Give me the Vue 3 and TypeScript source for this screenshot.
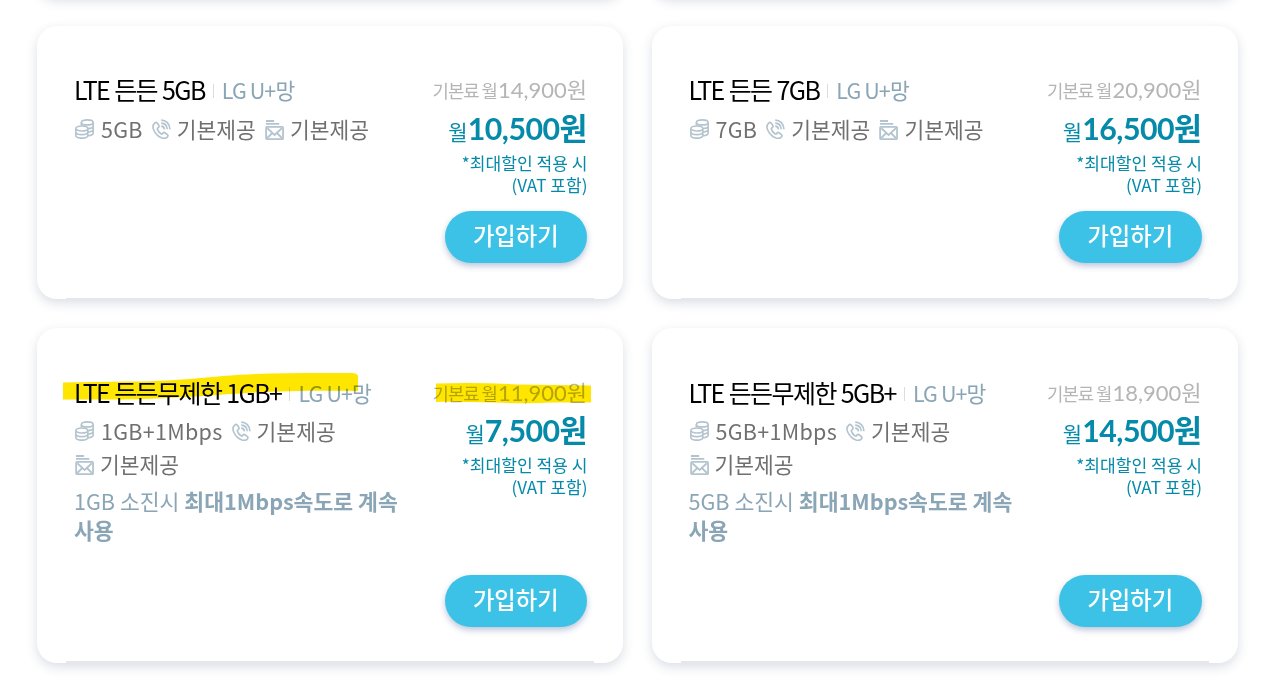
<template>
  <main class="page">
    <ul class="plans">
      <li v-for="n in 2" :key="`prev-${n}`" class="card card-prev"></li>
      <li
        v-for="plan in plans"
        :key="plan.name"
        class="card"
        :class="{ tall: plan.limit }"
      >
        <div class="info">
          <h2 class="title">
            <span class="name">{{ plan.name }}</span>
            <span class="network">LG U+망</span>
          </h2>
          <ul class="features">
            <li>
              <svg class="icon" viewBox="0 0 20 20" preserveAspectRatio="none">
                <ellipse cx="12.9" cy="3.4" rx="6.2" ry="2.5" />
                <path d="M6.7 3.4v3.2M19.1 3.4v10.8c0 1.3-2.4 2.3-5.4 2.5M19.1 7c0 1.4-2.6 2.5-5.8 2.5M19.1 10.600c0 1.300-2.300 2.300-5.400 2.500" />
                <ellipse cx="7.200" cy="9.500" rx="6.300" ry="2.500" />
                <path d="M.9 9.500v7.100c0 1.500 2.800 2.600 6.300 2.600s6.300-1.100 6.300-2.600V9.500M.9 13c0 1.500 2.800 2.600 6.300 2.600s6.300-1.100 6.300-2.600" />
              </svg>
              <span class="data">{{ plan.data }}</span>
            </li>
            <li>
              <svg class="icon" viewBox="0 0 20 20" preserveAspectRatio="none">
                <path d="M2.800 4.100C.9 5.800.5 8.100 1.800 11c1.700 3.700 4.800 6.700 8.700 8 2.600.8 4.700.3 5.900-1.300.6-.8.5-1.500-.2-2.100l-2.500-1.900c-.7-.5-1.400-.4-2 .2l-.8.9c-.4.4-.9.4-1.300.1C7.800 13.700 6.500 12.200 5.700 10.300c-.2-.5-.1-.9.3-1.300l.8-.7c.7-.6.8-1.200.4-2L5.600 4.300c-.6-1.200-1.700-1.300-2.800-.2z" />
                <path d="M9.700 7.100c1.900.1 3.200 1.300 3.400 3.300M9.700 4.100c3.600.1 6.100 2.500 6.300 6.200M9.700 1.100c5.200.1 8.900 3.700 9.200 9.100" />
              </svg>
              <span>기본제공</span>
            </li>
            <li>
              <svg class="icon mail" viewBox="0 0 20 20" preserveAspectRatio="none">
                <path d="M1 1h8.600M1 3.900h14" />
                <rect x="1.200" y="6.900" width="17.800" height="12.200" rx=".8" />
                <path d="M2.500 8.300l7.600 6.600 7.600-6.600M2.400 18l5-4.800M17.800 18l-5-4.800" />
              </svg>
              <span>기본제공</span>
            </li>
          </ul>
          <p v-if="plan.limit" class="limit">
            {{ plan.limit }} 소진시 <strong>최대1Mbps속도로 계속 사용</strong>
          </p>
        </div>
        <div class="fee">
          <p class="base">기본료 월<span class="num">{{ plan.base }}원</span></p>
          <p class="price">월<strong>{{ plan.price }}원</strong></p>
          <p class="note">*최대할인 적용 시<br />(VAT 포함)</p>
          <button type="button" class="join">가입하기</button>
        </div>
        <svg v-if="plan.marked" class="marker" viewBox="0 0 586 335">
          <path d="M26 54.5L88 53.5C122 54 154 51 186 48C222 44.5 270 45 316 45Q321 46 321 48V63C270 62 220 63.5 180 67C145 69.5 110 71.5 70 71.5L26 71.5Z" />
          <path d="M399 55.5Q440 54 480 56.5L554 57.5V74.5H515C477 76.5 440 73 399 74Z" />
        </svg>
      </li>
    </ul>
  </main>
</template>

<script setup lang="ts">
interface Plan {
  name: string;
  data: string;
  base: string;
  price: string;
  limit?: string;
  marked?: boolean;
}

const plans: Plan[] = [
  { name: "LTE 든든 5GB", data: "5GB", base: "14,900", price: "10,500" },
  { name: "LTE 든든 7GB", data: "7GB", base: "20,900", price: "16,500" },
  {
    name: "LTE 든든무제한 1GB+",
    data: "1GB+1Mbps",
    base: "11,900",
    price: "7,500",
    limit: "1GB",
    marked: true,
  },
  {
    name: "LTE 든든무제한 5GB+",
    data: "5GB+1Mbps",
    base: "18,900",
    price: "14,500",
    limit: "5GB",
  },
];
</script>

<style>
body {
  margin: 0;
  background: #fff;
}
</style>

<style scoped>
.page {
  height: 681px;
  overflow: hidden;
  font-family: "Noto Sans CJK KR", sans-serif;
}

ul,
p,
h2 {
  margin: 0;
  padding: 0;
  list-style: none;
}

.plans {
  display: grid;
  grid-template-columns: 586px 586px;
  grid-template-rows: 40px 273px 335px;
  column-gap: 28.5px;
  row-gap: 29px;
  margin: -43px 0 0 37px;
}

.card {
  position: relative;
  box-sizing: border-box;
  display: flex;
  justify-content: space-between;
  padding: 46px 36px 36px 37px;
  border-radius: 20px;
  background: #fff;
  box-shadow: 0 4px 11px rgba(40, 60, 100, 0.17);
}

.card::after {
  content: "";
  position: absolute;
  left: 29px;
  right: 29px;
  bottom: 0;
  height: 1px;
  background: #e4e8ec;
}

.tall::after {
  height: 2px;
}

.card-prev {
  padding: 0;
}

.card-prev::after {
  display: none;
}

.info {
  width: 345px;
}

.title {
  display: flex;
  align-items: center;
  height: 34px;
  white-space: nowrap;
}

.tall .title {
  padding-top: 1px;
}

.name {
  color: #000;
  font-size: 25px;
  font-weight: 400;
  line-height: 34px;
  letter-spacing: -1.55px;
  word-spacing: 0.8px;
}

.network {
  display: flex;
  align-items: center;
  padding-top: 2px;
  color: #8aa5b5;
  font-size: 21.5px;
  font-weight: 400;
  line-height: 34px;
  letter-spacing: -0.9px;
}

.network::before {
  content: "";
  width: 1px;
  height: 14px;
  margin: 2px 8px 0 8px;
  background: #dcdcdc;
}

.features {
  display: flex;
  flex-wrap: wrap;
  column-gap: 8px;
  margin-top: 6px;
}

.features li {
  display: flex;
  align-items: center;
  color: #707070;
  font-size: 21.5px;
  line-height: 33px;
  white-space: nowrap;
}

.data {
  letter-spacing: 0.3px;
}

.icon {
  width: 19px;
  height: 20px;
  margin: 1px 6px 0 1px;
  fill: none;
  stroke: #b4c4cf;
  stroke-width: 1.7;
}

.features li:first-child .icon {
  margin-right: 7px;
}

.mail {
  margin-top: 3px;
  stroke-width: 1.9;
}

.tall .features {
  margin-top: 5px;
}

.limit {
  margin-top: 6px;
  color: #8aa5b5;
  font-size: 21.6px;
  line-height: 29px;
}

.limit strong {
  font-weight: 700;
}

.fee {
  display: flex;
  flex-direction: column;
  align-items: flex-end;
  white-space: nowrap;
}

.base {
  height: 34px;
  padding-top: 1px;
  color: #b5b5b5;
  font-size: 17.8px;
  line-height: 34px;
  letter-spacing: -1px;
}

.tall .base {
  padding-top: 2px;
}

.base .num {
  margin-left: 1px;
  font-family: Lato, "Noto Sans CJK KR", sans-serif;
  font-size: 22px;
  letter-spacing: 0;
}

.price {
  height: 40px;
  padding-top: 1px;
  color: #058aa9;
  font-size: 21px;
  line-height: 40px;
}

.tall .price {
  padding-top: 0;
}

.price strong {
  font-family: Lato, "Noto Sans CJK KR", sans-serif;
  font-size: 30.3px;
  font-weight: 700;
  letter-spacing: -0.5px;
}

.note {
  margin: 4px -0.5px 0 0;
  color: #058aa9;
  font-size: 17.1px;
  line-height: 22px;
  text-align: right;
}

.join {
  width: 142.5px;
  height: 52px;
  margin-top: auto;
  padding: 0 0 5px;
  border: 0;
  border-radius: 26px;
  background: #3bc2e6;
  box-shadow: 0 3px 6px rgba(30, 60, 130, 0.3);
  color: #fff;
  font-family: inherit;
  font-size: 23.3px;
  font-weight: 500;
}

/* highlighter strokes lie over the text */
.marker {
  position: absolute;
  left: 0;
  top: 0;
  width: 586px;
  height: 335px;
  fill: #ffe600;
  mix-blend-mode: multiply;
  pointer-events: none;
}
</style>
